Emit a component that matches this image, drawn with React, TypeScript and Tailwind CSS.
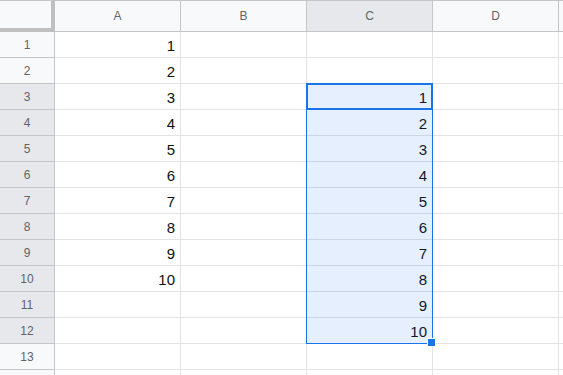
import React from "react";

const cols = ["A", "B", "C", "D", ""];
const rows = Array.from({ length: 14 }, (_, i) => i + 1);

function cellValue(r: number, c: number): string {
  if (c === 0 && r <= 10) return String(r);
  if (c === 2 && r >= 3 && r <= 12) return String(r - 2);
  return "";
}

export default function App() {
  return (
    <div
      className="relative w-[563px] h-[375px] overflow-hidden bg-white"
      style={{ fontFamily: '"Liberation Sans", Arial, sans-serif' }}
    >
      <div className="grid grid-cols-[55px_repeat(4,126px)_1fr] grid-rows-[32px_repeat(14,26px)]">
        {/* corner */}
        <div className="bg-[#f8f9fa] border-t border-[#c4c7c5] border-r-[4px] border-b-[4px] border-r-[#c0c0c0] border-b-[#c0c0c0]" />
        {cols.map((c, i) => (
          <div
            key={"h" + i}
            className={
              "flex items-center justify-center border-t border-r border-b border-t-[#c4c7c5] border-r-[#c4c7c5] border-b-[#c4c7c5] text-[12px] text-[#60646a] " +
              (i === 2 ? "bg-[#e6e8eb]" : "bg-[#f8f9fa]")
            }
          >
            {c}
          </div>
        ))}
        {rows.map((r) => (
          <React.Fragment key={"r" + r}>
            <div
              className={
                "flex items-center justify-center border-r border-b border-r-[#c4c7c5] border-b-[#c4c7c5] text-[12px] text-[#60646a] " +
                (r >= 3 && r <= 12 ? "bg-[#e6e8eb]" : "bg-[#f8f9fa]")
              }
            >
              {r <= 13 ? r : ""}
            </div>
            {cols.map((_, c) => (
              <div
                key={"c" + r + "-" + c}
                className="flex items-end justify-end border-r border-b border-[#e2e3e3] pr-[5px] pb-[3px] text-[15px] leading-[17px] text-[#111]"
              >
                {cellValue(r, c)}
              </div>
            ))}
          </React.Fragment>
        ))}
      </div>

      {/* selection range */}
      <div className="absolute left-[306px] top-[83px] w-[127px] h-[261px] border border-[#1a73e8] bg-[rgba(14,101,235,0.1)]" />
      {/* active cell */}
      <div className="absolute left-[306px] top-[83px] w-[127px] h-[27px] border-2 border-[#1a73e8]" />
      {/* fill handle */}
      <div className="absolute left-[427px] top-[338px] w-[9px] h-[9px] border border-white bg-[#1a73e8]" />
    </div>
  );
}
